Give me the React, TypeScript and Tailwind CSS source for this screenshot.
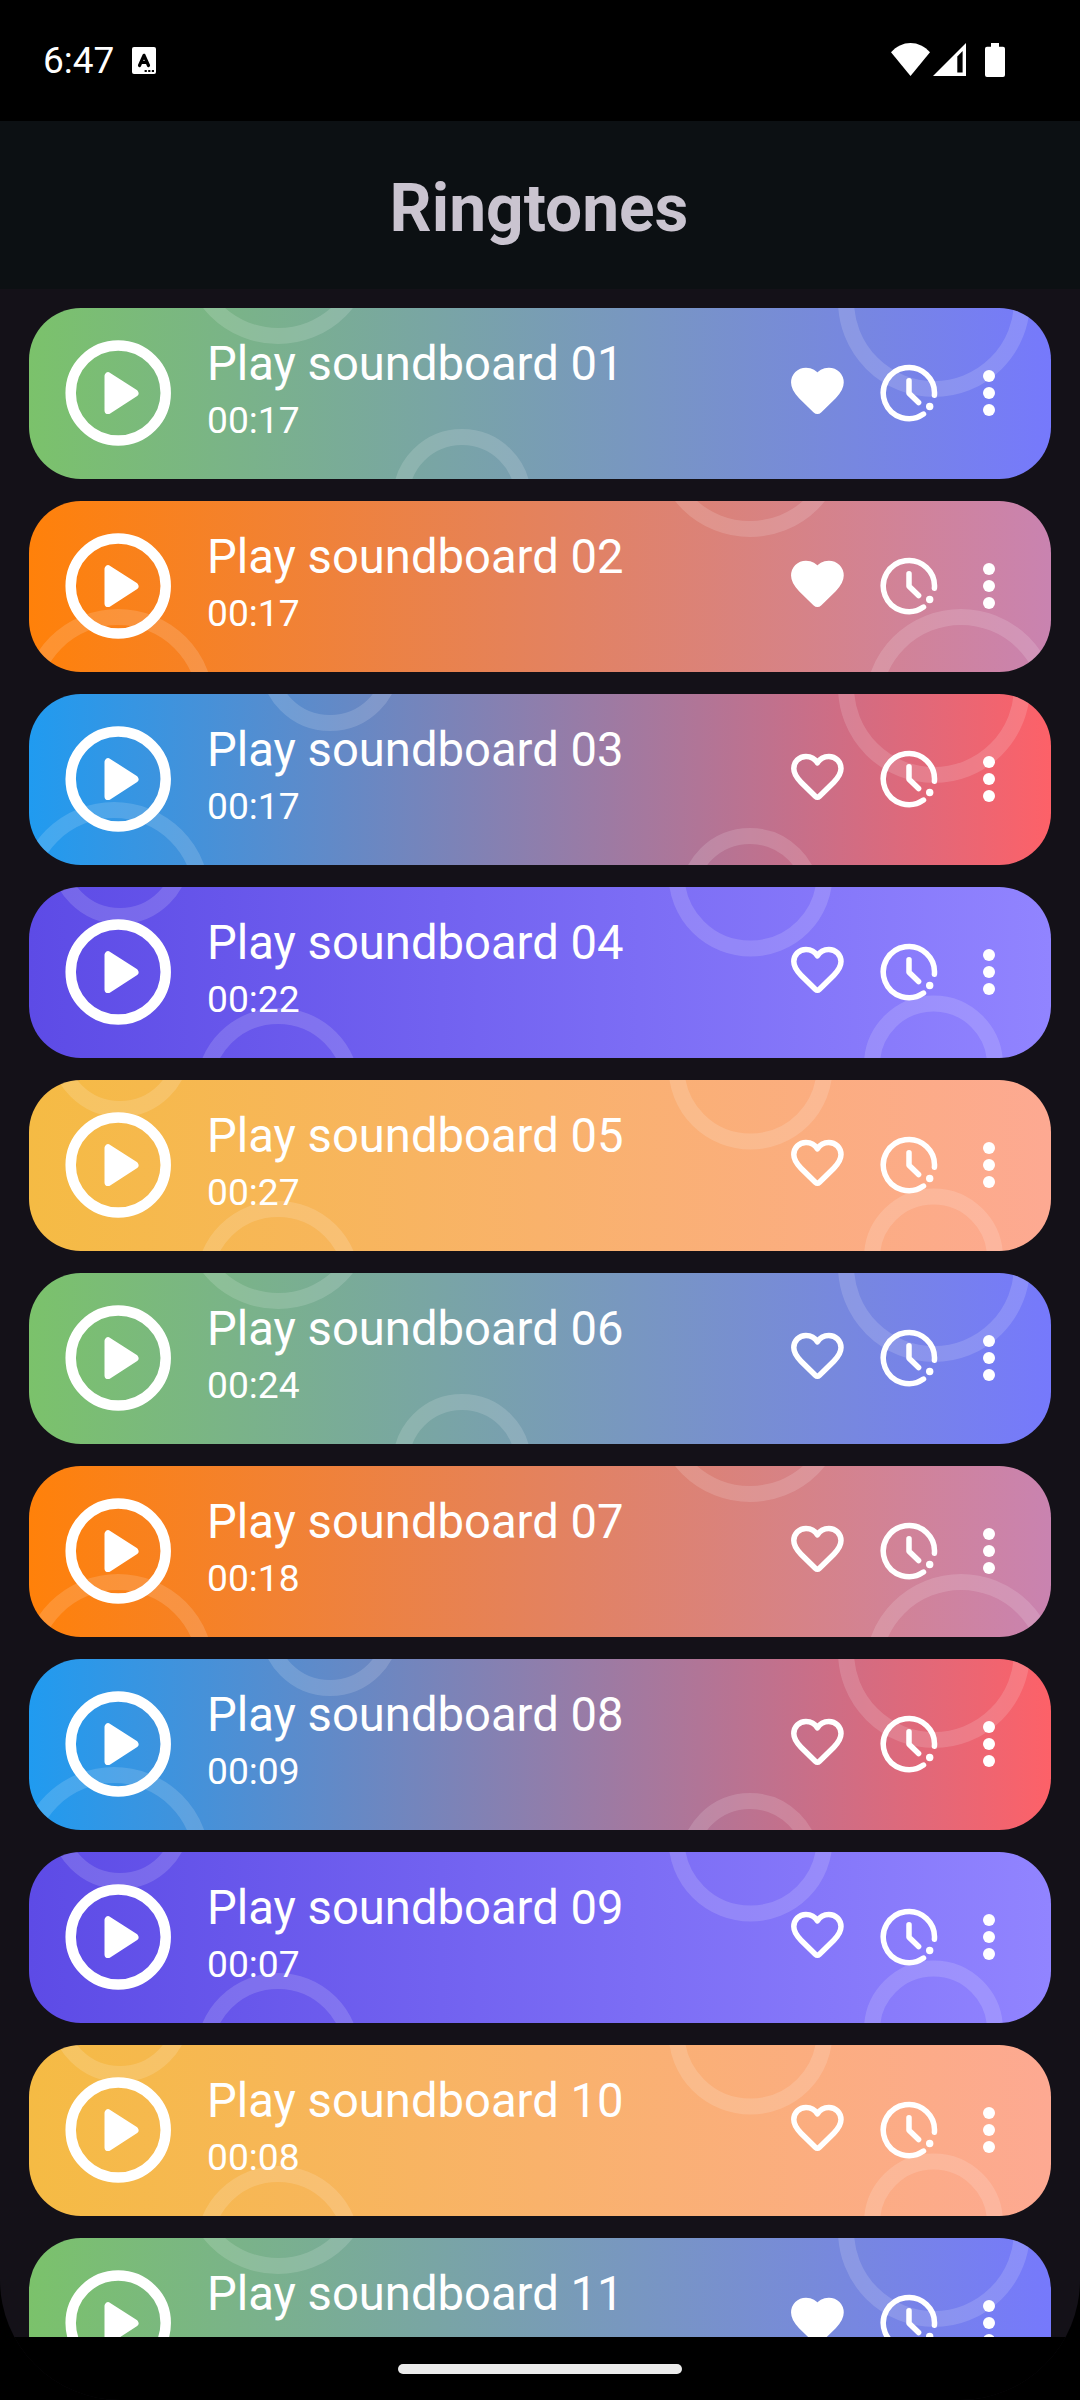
type Ring = { cx: number; cy: number; r: number };

type Theme = { gradient: string; rings: Ring[] };

const themes: Theme[] = [
  {
    gradient: "bg-linear-to-r/srgb from-[#7bc26b] to-[#7679fc]",
    rings: [
      { cx: 249, cy: -60, r: 88 },
      { cx: 433, cy: 190, r: 61 },
      { cx: 905, cy: -7, r: 88 },
    ],
  },
  {
    gradient: "bg-linear-to-r/srgb from-[#ff810a] to-[#c983b0]",
    rings: [
      { cx: 89, cy: 204, r: 88 },
      { cx: 721, cy: -60, r: 88 },
      { cx: 932, cy: 204, r: 88 },
    ],
  },
  {
    gradient: "bg-linear-to-r/srgb from-[#209bf0] to-[#fd6168]",
    rings: [
      { cx: 85, cy: 204, r: 88 },
      { cx: 301, cy: -33, r: 62 },
      { cx: 721, cy: 204, r: 62 },
      { cx: 905, cy: -7, r: 88 },
    ],
  },
  {
    gradient: "bg-linear-to-r/srgb from-[#5d4be6] to-[#9184ff]",
    rings: [
      { cx: 91, cy: -33, r: 62 },
      { cx: 249, cy: 203, r: 74 },
      { cx: 721.5, cy: -12.5, r: 74 },
      { cx: 904.5, cy: 178, r: 61.5 },
    ],
  },
  {
    gradient: "bg-linear-to-r/srgb from-[#f5bb44] to-[#fda992]",
    rings: [
      { cx: 91, cy: -33, r: 62 },
      { cx: 249, cy: 203, r: 74 },
      { cx: 721.5, cy: -12.5, r: 74 },
      { cx: 904.5, cy: 178, r: 61.5 },
    ],
  },
];

const ringtones = [
  { title: "Play soundboard 01", duration: "00:17", favorite: true },
  { title: "Play soundboard 02", duration: "00:17", favorite: true },
  { title: "Play soundboard 03", duration: "00:17", favorite: false },
  { title: "Play soundboard 04", duration: "00:22", favorite: false },
  { title: "Play soundboard 05", duration: "00:27", favorite: false },
  { title: "Play soundboard 06", duration: "00:24", favorite: false },
  { title: "Play soundboard 07", duration: "00:18", favorite: false },
  { title: "Play soundboard 08", duration: "00:09", favorite: false },
  { title: "Play soundboard 09", duration: "00:07", favorite: false },
  { title: "Play soundboard 10", duration: "00:08", favorite: false },
  { title: "Play soundboard 11", duration: "00:20", favorite: true },
];

const PlayIcon = () => (
  <svg viewBox="0 0 106 106" className="size-[106px] shrink-0">
    <circle cx="53.2" cy="53" r="47.5" fill="none" stroke="white" strokeWidth="10.5" />
    <path
      d="M43.2 36v34.4L69.8 53.2z"
      fill="white"
      stroke="white"
      strokeWidth="7.4"
      strokeLinejoin="round"
    />
  </svg>
);

const HeartIcon = ({ filled }: { filled: boolean }) => (
  <svg viewBox="0 0 53 48" className="mb-1 h-[48px] w-[53px] shrink-0">
    <path
      d="M26.4 9.8C24 5.8 19.5 3.4 15 3.4C8 3.4 2.8 8.8 2.8 15.6C2.8 21 6 25.2 10 29.2L24.3 43.2Q26.4 45.2 28.5 43.2L42.8 29.2C46.8 25.2 50 21 50 15.6C50 8.8 44.8 3.4 37.8 3.4C33.3 3.4 28.8 5.8 26.4 9.8Z"
      fill={filled ? "white" : "none"}
      stroke="white"
      strokeWidth="5.5"
      strokeLinejoin="round"
    />
  </svg>
);

const ClockIcon = () => (
  <svg viewBox="0 0 58 58" className="size-[58px] shrink-0">
    <g fill="none" stroke="white" strokeWidth="5.5" strokeLinecap="round" strokeLinejoin="round">
      <path d="M54.4 31.3A25.6 25.6 0 1 0 43.5 50.1" />
      <path d="M29 16.8V29.3L38.6 38.6" />
    </g>
    <circle cx="49.7" cy="42.5" r="3.7" fill="white" />
  </svg>
);

const MoreIcon = () => (
  <svg viewBox="0 0 12 46" className="h-[46px] w-3 shrink-0" fill="white">
    <circle cx="6" cy="6" r="6" />
    <circle cx="6" cy="23" r="6" />
    <circle cx="6" cy="40" r="6" />
  </svg>
);

const StatusBar = () => (
  <div className="flex h-[121px] shrink-0 items-start bg-black pr-[75px] pl-[43px] text-white">
    <div className="mt-[39px] text-[37px] leading-[44px]">6:47</div>
    <svg viewBox="0 0 24 27" className="mt-[47px] ml-[18px] h-[27px] w-6">
      <rect width="24" height="27" rx="2" fill="white" />
      <path
        d="M7.5 18.5L12 8.3L16.5 18.5M8.8 15.5H15.2"
        fill="none"
        stroke="black"
        strokeWidth="3.2"
        strokeLinecap="round"
        strokeLinejoin="round"
      />
      <path d="M12.6 22.9h2.2v2.2h-2.2zM16.2 22.9h2.2v2.2h-2.2zM19.8 22.9h2.2v2.2h-2.2z" fill="black" />
    </svg>
    <div className="flex-1" />
    <svg viewBox="0 0 39 33" className="mt-[43px] h-[33px] w-[39px]" fill="white">
      <path d="M19.5 33L0 9.3C5.4 3.4 12 0 19.5 0S33.6 3.4 39 9.3z" />
    </svg>
    <svg viewBox="0 0 33 33" className="mt-[43px] ml-[3px] size-[33px]">
      <path d="M33 0V33H0z" fill="white" />
      <path d="M24.3 13.4L29.6 8V29.4H24.3z" fill="black" />
    </svg>
    <svg viewBox="0 0 20 34" className="mt-[43px] ml-[19px] h-[34px] w-5" fill="white">
      <path d="M6 0h8v3.7h4a2 2 0 0 1 2 2V32a2 2 0 0 1-2 2H2a2 2 0 0 1-2-2V5.7a2 2 0 0 1 2-2h4z" />
    </svg>
  </div>
);

const App = () => {
  return (
    <div className="h-[2400px] w-[1080px] overflow-hidden bg-black font-['Roboto',sans-serif]">
      <div className="flex h-full flex-col overflow-hidden rounded-b-[120px] bg-[#141118]">
        <StatusBar />

        <header className="flex h-[168px] shrink-0 items-center justify-center bg-[#0c1013] pt-[7px] pr-0.5">
          <h1 className="text-[65.8px] leading-none font-bold text-[#cac4d0]">Ringtones</h1>
        </header>

        <main className="flex min-h-0 flex-1 flex-col gap-[22px] overflow-hidden px-[29px] pt-[19px]">
          {ringtones.map((ringtone, index) => {
            const theme = themes[index % themes.length];
            return (
              <div
                key={ringtone.title}
                className={`relative h-[171px] shrink-0 overflow-hidden rounded-[52px] ${theme.gradient}`}
              >
                <svg viewBox="0 0 1022 171" className="absolute inset-0 h-full w-full">
                  {theme.rings.map((ring) => (
                    <circle
                      key={ring.cx}
                      cx={ring.cx}
                      cy={ring.cy}
                      r={ring.r}
                      fill="none"
                      stroke="white"
                      strokeOpacity="0.15"
                      strokeWidth="16"
                    />
                  ))}
                </svg>
                <div className="relative flex h-full items-center pr-14 pb-px pl-9 text-white">
                  <PlayIcon />
                  <div className="ml-9 flex flex-1 flex-col gap-[7px] self-start pt-[29px]">
                    <div className="text-[47.2px] leading-[54px]">{ringtone.title}</div>
                    <div className="text-[37.2px] leading-[44px]">{ringtone.duration}</div>
                  </div>
                  <HeartIcon filled={ringtone.favorite} />
                  <div className="ml-9">
                    <ClockIcon />
                  </div>
                  <div className="ml-[45px]">
                    <MoreIcon />
                  </div>
                </div>
              </div>
            );
          })}
        </main>

        <footer className="flex h-[63px] shrink-0 justify-center bg-black pt-[27px]">
          <div className="h-[10px] w-[284px] rounded-full bg-[#ebebeb]" />
        </footer>
      </div>
    </div>
  );
};

export default App;
